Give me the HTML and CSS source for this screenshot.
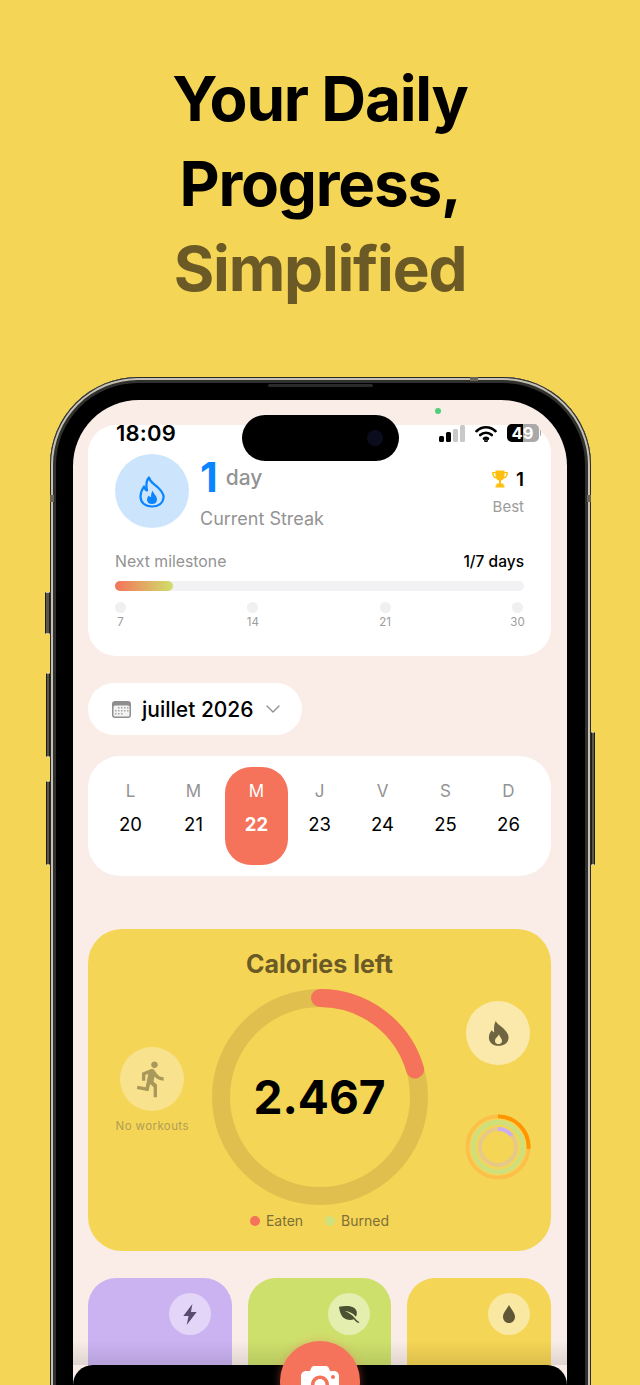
FILE: index.html
```html
<!DOCTYPE html>
<html lang="en">
<head>
    <meta charset="UTF-8">
    <title>Your Daily Progress</title>
    <link rel="stylesheet" href="styles.css">
</head>
<body>
<h1 class="headline">
    <span>Your Daily</span>
    <span>Progress,</span>
    <span class="headline-soft">Simplified</span>
</h1>

<div class="phone">
    <i class="side-btn btn-mute"></i>
    <i class="side-btn btn-up"></i>
    <i class="side-btn btn-down"></i>
    <i class="side-btn btn-power"></i>
    <i class="speaker"></i>
    <i class="band band-left"></i>
    <i class="band band-right"></i>
    <i class="band band-top"></i>

    <div class="screen">
        <i class="mic-dot"></i>
        <div class="island"><i class="island-cam"></i></div>

        <div class="status">
            <span class="status-time">18:09</span>
            <div class="status-icons">
                <svg width="26" height="17" viewBox="0 0 26 17">
                    <rect x="0" y="11" width="5" height="6" rx="1.5" fill="#000"/>
                    <rect x="7" y="7" width="5" height="10" rx="1.5" fill="#000"/>
                    <rect x="14" y="4" width="5" height="13" rx="1.5" fill="#c9c9c9"/>
                    <rect x="21" y="0" width="5" height="17" rx="1.5" fill="#c9c9c9"/>
                </svg>
                <svg width="22" height="17" viewBox="0 0 22 17" fill="none" stroke="#000" stroke-width="2.6" stroke-linecap="round">
                    <path d="M1.5 6.2C6.8 1 15.2 1 20.5 6.2"/>
                    <path d="M5.2 10C8.4 6.9 13.6 6.9 16.8 10"/>
                    <path d="M9 13.6C10.2 12.6 11.8 12.6 13 13.6"/>
                    <circle cx="11" cy="15.4" r="0.6" fill="#000"/>
                </svg>
                <div class="battery">
                    <div class="battery-body"><span class="battery-level"></span><span class="battery-num">49</span></div>
                    <i class="battery-tip"></i>
                </div>
            </div>
        </div>

        <section class="card streak">
            <div class="streak-head">
                <div class="flame-circle">
                    <svg width="26" height="33" viewBox="0 0 26 32">
                        <path d="M10 2C11 7 15 8 19 12C23 16 25 19 24.5 22C24 28 19 31 13 31C6 31 1.5 27 1.5 21C1.5 17 3 14 5 11C5.5 13 6.5 14.5 8 15C7 10 7 5 10 2Z" fill="none" stroke="#0a84ff" stroke-width="2.2" stroke-linejoin="round"/>
                        <path d="M13.5 15C14 18 18 20 18 24C18 27 16 28.5 13 28.5C10 28.5 8 27 8 24C8 22.5 9 21 10 20C10.5 21 11 21.5 12 21.5C12 19 12.5 17 13.5 15Z" fill="#0a84ff"/>
                    </svg>
                </div>
                <div class="streak-text">
                    <div class="streak-count"><b>1</b><span>day</span></div>
                    <div class="streak-label">Current Streak</div>
                </div>
                <div class="streak-best">
                    <div class="best-count">
                        <svg width="16" height="18" viewBox="0 0 16 18">
                            <path d="M3.5 0.5H12.5V2H16C16 6 14.5 8 11.8 8.6C11 9.8 10 10.4 9 10.6V13.5H11.5V15.5H12.5V17.5H3.5V15.5H4.5V13.5H7V10.6C6 10.4 5 9.8 4.2 8.6C1.500 8 0 6 0 2H3.5ZM1.500 3.300C1.700 5.200 2.400 6.400 3.700 7C3.500 6 3.500 4.700 3.500 3.300ZM14.500 3.300H12.500C12.500 4.700 12.500 6 12.300 7C13.600 6.400 14.300 5.200 14.500 3.300Z" fill="#fdbf0f" fill-rule="evenodd"/>
                        </svg>
                        <b>1</b>
                    </div>
                    <div class="best-label">Best</div>
                </div>
            </div>

            <div class="milestone-row">
                <span class="milestone-name">Next milestone</span>
                <span class="milestone-days">1/7 days</span>
            </div>
            <div class="bar"><div class="bar-fill"></div></div>
            <div class="ticks">
                <div class="tick"><i></i><span>7</span></div>
                <div class="tick"><i></i><span>14</span></div>
                <div class="tick"><i></i><span>21</span></div>
                <div class="tick"><i></i><span>30</span></div>
            </div>
        </section>

        <div class="month-pill">
            <svg width="19" height="17" viewBox="0 0 19 17">
                <rect x="0" y="0" width="19" height="17" rx="3" fill="#8e8e8e"/>
                <rect x="1.500" y="4.500" width="16" height="11" rx="1.500" fill="#f2f2f2"/>
                <g fill="#a6a6a6">
                    <rect x="6" y="6" width="1.500" height="1.500"/><rect x="9" y="6" width="1.500" height="1.500"/><rect x="12" y="6" width="1.500" height="1.500"/><rect x="15" y="6" width="1.500" height="1.500"/>
                    <rect x="3" y="9" width="1.500" height="1.500"/><rect x="6" y="9" width="1.500" height="1.500"/><rect x="9" y="9" width="1.500" height="1.500"/><rect x="12" y="9" width="1.500" height="1.500"/><rect x="15" y="9" width="1.500" height="1.500"/>
                    <rect x="3" y="12" width="1.500" height="1.500"/><rect x="6" y="12" width="1.500" height="1.500"/><rect x="9" y="12" width="1.500" height="1.500"/>
                </g>
            </svg>
            <span class="month-name">juillet 2026</span>
            <svg width="14" height="8" viewBox="0 0 14 8" fill="none" stroke="#8e8e8e" stroke-width="1.300" stroke-linecap="round" stroke-linejoin="round"><path d="M1 1L7 7L13 1"/></svg>
        </div>

        <section class="card week">
            <div class="day"><span class="day-letter">L</span><span class="day-num">20</span></div>
            <div class="day"><span class="day-letter">M</span><span class="day-num">21</span></div>
            <div class="day day-active"><span class="day-letter">M</span><span class="day-num">22</span></div>
            <div class="day"><span class="day-letter">J</span><span class="day-num">23</span></div>
            <div class="day"><span class="day-letter">V</span><span class="day-num">24</span></div>
            <div class="day"><span class="day-letter">S</span><span class="day-num">25</span></div>
            <div class="day"><span class="day-letter">D</span><span class="day-num">26</span></div>
        </section>

        <section class="calories">
            <h2 class="cal-title">Calories left</h2>
            <div class="cal-body">
                <div class="cal-side cal-left">
                    <div class="soft-circle">
                        <svg width="40" height="40" viewBox="0 0 24 24"><path d="M13.49 5.480c1.100 0 2-.9 2-2s-.9-2-2-2-2 .9-2 2 .9 2 2 2zm-3.600 13.900l1-4.400 2.100 2v6h2v-7.500l-2.100-2 .6-3c1.300 1.500 3.300 2.500 5.500 2.500v-2c-1.900 0-3.500-1-4.300-2.400l-1-1.600c-.4-.6-1-1-1.700-1-.3 0-.5.1-.8.1l-5.200 2.200v4.700h2v-3.400l1.800-.7-1.600 8.100-4.900-1-.4 2 7 1.400z" fill="#a8985a"/></svg>
                    </div>
                    <span class="no-workouts">No workouts</span>
                </div>
                <svg class="cal-ring" width="216" height="216" viewBox="0 0 216 216" fill="none" stroke-width="18">
                    <circle cx="108" cy="108" r="99" stroke="#e0bf4f"/>
                    <circle cx="108" cy="108" r="99" stroke="#f4735a" stroke-linecap="round" pathLength="100" stroke-dasharray="20.500 100" transform="rotate(-90 108 108)"/>
                </svg>
                <div class="cal-num">2.467</div>
                <div class="cal-side cal-right">
                    <div class="soft-circle soft-light">
                        <svg width="21" height="28" viewBox="0 0 24 30">
                            <path d="M9 1C10 5 14 6 18 10C22 14 23.500 17 23.500 20C23.500 26 18.500 29.500 12 29.500C5.500 29.500 1 25.500 1 20C1 16 3 13.500 4.500 11.500C5 13 6 14 7 14C6.500 9 7 4.500 9 1ZM12.500 16.500C12 19 8 20.500 8 24C8 26.500 10 27.500 12 27.500C14 27.500 16 26.500 16 24C16 21.500 13.500 20 12.500 16.500Z" fill="#6f6542" fill-rule="evenodd"/>
                        </svg>
                    </div>
                    <svg width="66" height="66" viewBox="0 0 68 68" fill="none" stroke-width="4">
                        <circle cx="34" cy="34" r="31.500" stroke="#fbc04a"/>
                        <circle cx="34" cy="34" r="31.500" stroke="#ff9500" pathLength="100" stroke-dasharray="26 100" transform="rotate(-90 34 34)"/>
                        <circle cx="34" cy="34" r="25.500" stroke="#cfdf7c" stroke-width="5"/>
                        <circle cx="34" cy="34" r="18.500" stroke="#e6c88a"/>
                        <circle cx="34" cy="34" r="18.500" stroke="#c9aef2" pathLength="100" stroke-dasharray="14 100" transform="rotate(-90 34 34)"/>
                    </svg>
                </div>
            </div>
            <div class="legend">
                <span class="legend-item"><i class="legend-dot dot-eaten"></i>Eaten</span>
                <span class="legend-item"><i class="legend-dot dot-burned"></i>Burned</span>
            </div>
        </section>

        <div class="macros">
            <div class="macro macro-purple">
                <div class="macro-icon">
                    <svg width="14" height="21" viewBox="0 0 14 22"><path d="M9.500 0L0 12.500H5.500L3.500 22L14 8.500H8Z" fill="#584d70"/></svg>
                </div>
            </div>
            <div class="macro macro-green">
                <div class="macro-icon">
                    <svg width="21" height="17" viewBox="0 0 22 20" preserveAspectRatio="none"><path d="M0 1C9 -1 17 0 18.500 6.500C19 9 18.500 11 17.500 12.500C15 8.500 10.500 6.500 6 6C10 8 14 10.500 16.500 14C17.500 15.500 19.500 17.500 21.500 19L20 20C18 18.500 16.500 17 15.500 15.500C12.500 17 8 16.500 5 14C2 11.500 0.500 6 0 1Z" fill="#4b5233"/></svg>
                </div>
            </div>
            <div class="macro macro-yellow">
                <div class="macro-icon">
                    <svg width="12" height="18" viewBox="0 0 14 20" preserveAspectRatio="none"><path d="M7 0C9 4 14 8.500 14 13C14 17 11 20 7 20C3 20 0 17 0 13C0 8.500 5 4 7 0Z" fill="#5f5636"/></svg>
                </div>
            </div>
        </div>

        <div class="bottom-fade"></div>
        <div class="tabbar"></div>
        <div class="fab">
            <svg width="38" height="32" viewBox="0 0 38 32">
                <path d="M13 0H25C26.500 0 27.500 1 28 2.500L29 5H33C35.800 5 38 7.200 38 10V27C38 29.800 35.800 32 33 32H5C2.200 32 0 29.800 0 27V10C0 7.200 2.200 5 5 5H9L10 2.500C10.500 1 11.500 0 13 0ZM19 9.500C14 9.500 10 13.500 10 18.500C10 23.500 14 27.500 19 27.500C24 27.500 28 23.500 28 18.500C28 13.500 24 9.500 19 9.500ZM19 13C22 13 24.500 15.500 24.500 18.500C24.500 21.500 22 24 19 24C16 24 13.500 21.500 13.500 18.500C13.500 15.500 16 13 19 13ZM32 9C30.900 9 30 9.900 30 11C30 12.100 30.900 13 32 13C33.100 13 34 12.100 34 11C34 9.900 33.100 9 32 9Z" fill="#fff" fill-rule="evenodd"/>
            </svg>
        </div>
    </div>
</div>
</body>
</html>
```

FILE: styles.css
```css
* {
    margin: 0;
    border: 0;
    padding: 0;
    box-sizing: border-box;
}
html, body {
    height: 1385px;
    overflow: hidden;
}
body {
    background-color: #f5d555;
    font-family: "Inter", "Liberation Sans", sans-serif;
    color: #000;
}
i {
    display: block;
}

/* headline */
.headline {
    display: flex;
    flex-direction: column;
    align-items: center;
    padding-top: 56px;
    font-size: 62px;
    font-weight: 700;
    line-height: 85px;
    letter-spacing: -1.200px;
}
.headline-soft {
    color: #6b5a26;
}

/* phone shell */
.phone {
    position: relative;
    width: 541px;
    height: 1046px;
    margin: 66px 0 0 50px;
    padding: 23px 24px 23px 23px;
    background-color: #000;
    border-radius: 88px 88px 0 0;
    box-shadow: inset 0 0 0 1px #2b2a26, inset 0 0 0 3px #c4c0b4, inset 0 0 0 6px #32302c;
}
.side-btn {
    position: absolute;
    background-color: #5a5648;
    border: 1px solid #1f1d18;
    border-top: 1px solid #c8c4b8;
    border-bottom: 1px solid #c8c4b8;
}
.btn-mute {
    left: -5px;
    top: 215px;
    width: 5px;
    height: 42px;
}
.btn-up {
    left: -4px;
    top: 296px;
    width: 4px;
    height: 84px;
}
.btn-down {
    left: -4px;
    top: 404px;
    width: 4px;
    height: 84px;
}
.btn-power {
    right: -4px;
    top: 355px;
    width: 4px;
    height: 133px;
}
.speaker {
    position: absolute;
    left: 218px;
    top: 7px;
    width: 105px;
    height: 3px;
    background-color: #2a2a2a;
    border-radius: 2px;
}
.band {
    position: absolute;
    background-color: #6b655a;
}
.band-left {
    left: 0;
    top: 118px;
    width: 4px;
    height: 7px;
}
.band-right {
    right: 0;
    top: 118px;
    width: 4px;
    height: 7px;
}
.band-top {
    left: 420px;
    top: 0;
    width: 8px;
    height: 4px;
}
.screen {
    position: relative;
    height: 1000px;
    padding: 25px 16px 0 15px;
    background-color: #faede8;
    border-radius: 66px 66px 0 0;
    overflow: hidden;
}

/* status bar */
.mic-dot {
    position: absolute;
    left: 362px;
    top: 8px;
    width: 6px;
    height: 6px;
    border-radius: 50%;
    background-color: #4fcf7a;
}
.island {
    position: absolute;
    left: 169px;
    top: 15px;
    width: 157px;
    height: 46px;
    border-radius: 23px;
    background-color: #000;
}
.island-cam {
    position: absolute;
    right: 16px;
    top: 15px;
    width: 16px;
    height: 16px;
    border-radius: 50%;
    background-color: #0b0d1e;
}
.status {
    position: absolute;
    left: 43px;
    right: 26px;
    top: 22px;
    display: flex;
    justify-content: space-between;
    align-items: center;
    height: 22px;
}
.status-time {
    font-size: 22px;
    font-weight: 600;
    letter-spacing: 0.2px;
}
.status-icons {
    display: flex;
    align-items: center;
    gap: 10px;
}
.battery {
    display: flex;
    align-items: center;
    gap: 1px;
}
.battery-body {
    position: relative;
    width: 32px;
    height: 18px;
    border-radius: 5px;
    background-color: #a9a9a9;
    overflow: hidden;
}
.battery-tip {
    width: 1.5px;
    height: 6px;
    border-radius: 0 2px 2px 0;
    background-color: #a9a9a9;
}
.battery-level {
    position: absolute;
    left: 0;
    top: 0;
    width: 16px;
    height: 18px;
    background-color: #000;
}
.battery-num {
    position: absolute;
    left: 0;
    width: 32px;
    text-align: center;
    color: #fff;
    font-size: 16.500px;
    font-weight: 700;
    line-height: 18px;
}

/* white cards */
.card {
    background-color: #fff;
}
.streak {
    padding: 29px 27px 27px;
    border-radius: 28px;
}
.streak-head {
    display: flex;
    align-items: flex-start;
}
.flame-circle {
    display: flex;
    align-items: center;
    justify-content: center;
    width: 74px;
    height: 74px;
    margin-right: 11px;
    border-radius: 50%;
    background-color: #cce5fd;
}
.streak-text {
    flex-grow: 1;
}
.streak-count {
    display: flex;
    align-items: center;
    gap: 8px;
    height: 46px;
}
.streak-count b {
    color: #0a84ff;
    font-size: 41px;
    font-weight: 700;
}
.streak-count span {
    color: #939393;
    font-size: 21px;
    font-weight: 500;
}
.streak-label {
    margin-top: 7px;
    color: #939393;
    font-size: 18px;
    line-height: 24px;
}
.streak-best {
    display: flex;
    flex-direction: column;
    align-items: flex-end;
}
.best-count {
    display: flex;
    align-items: center;
    gap: 8px;
    height: 50px;
}
.best-count b {
    font-size: 19px;
    font-weight: 600;
}
.best-label {
    margin-top: -7px;
    color: #9c9c9c;
    font-size: 15px;
    line-height: 20px;
}
.milestone-row {
    display: flex;
    justify-content: space-between;
    align-items: center;
    height: 20px;
    margin-top: 20px;
}
.milestone-name {
    color: #939393;
    font-size: 15.800px;
}
.milestone-days {
    font-size: 15.500px;
    font-weight: 500;
}
.bar {
    height: 10px;
    margin-top: 10px;
    border-radius: 5px;
    background-color: #f2f2f5;
}
.bar-fill {
    width: 58px;
    height: 10px;
    border-radius: 5px;
    background: linear-gradient(90deg, #f4735a, #cfe06c);
}
.ticks {
    display: flex;
    justify-content: space-between;
    margin-top: 11px;
    padding-right: 1px;
}
.tick {
    display: flex;
    flex-direction: column;
    align-items: center;
    width: 11px;
}
.tick i {
    width: 11px;
    height: 11px;
    border-radius: 50%;
    background-color: #f0f0f2;
}
.tick span {
    margin-top: 2px;
    color: #9c9c9c;
    font-size: 11.500px;
    line-height: 14px;
    white-space: nowrap;
}

/* month + week */
.month-pill {
    display: flex;
    align-items: center;
    width: 214px;
    height: 52px;
    margin-top: 27px;
    padding-left: 24px;
    border-radius: 26px;
    background-color: #fff;
}
.month-name {
    margin: 0 12px 0 11px;
    font-size: 21px;
    font-weight: 500;
}
.week {
    display: grid;
    grid-template-columns: repeat(7, 1fr);
    margin-top: 21px;
    padding: 11px;
    border-radius: 32px;
}
.day {
    display: flex;
    flex-direction: column;
    align-items: center;
    height: 98px;
    padding-top: 13px;
    border-radius: 26px;
}
.day-letter {
    color: #939393;
    font-size: 17px;
    line-height: 22px;
}
.day-num {
    margin-top: 10px;
    font-size: 18.500px;
    line-height: 24px;
}
.day-active {
    background-color: #f4735a;
}
.day-active .day-letter {
    color: #fff;
}
.day-active .day-num {
    color: #fff;
    font-weight: 700;
}

/* calories */
.calories {
    display: flex;
    flex-direction: column;
    height: 322px;
    margin-top: 53px;
    padding-top: 20px;
    border-radius: 34px;
    background-color: #f5d555;
}
.cal-title {
    color: #6b5a26;
    font-size: 25px;
    font-weight: 700;
    line-height: 30px;
    text-align: center;
}
.cal-body {
    position: relative;
    display: grid;
    grid-template-columns: 1fr 216px 1fr;
    align-items: center;
    margin-top: 10px;
}
.cal-ring {
    grid-column: 2;
    grid-row: 1;
}
.cal-num {
    position: absolute;
    left: 0;
    right: 0;
    text-align: center;
    font-size: 46px;
    font-weight: 700;
    line-height: 216px;
}
.cal-side {
    display: flex;
    flex-direction: column;
    align-items: center;
    padding-bottom: 14px;
}
.cal-left {
    grid-column: 1;
    grid-row: 1;
    padding-left: 5px;
}
.cal-right {
    grid-column: 3;
    grid-row: 1;
    gap: 49px;
    padding-left: 18px;
}
.soft-circle {
    display: flex;
    align-items: center;
    justify-content: center;
    width: 64px;
    height: 64px;
    border-radius: 50%;
    background-color: #f8e28e;
}
.soft-light {
    background-color: #fbe9ab;
}
.no-workouts {
    margin-top: 8px;
    color: #b09e55;
    font-size: 11.500px;
    line-height: 14px;
    letter-spacing: 0.4px;
}
.legend {
    display: flex;
    justify-content: center;
    gap: 22px;
    margin-top: 7px;
}
.legend-item {
    display: flex;
    align-items: center;
    gap: 6px;
    color: #7d6f38;
    font-size: 14px;
    line-height: 18px;
}
.legend-dot {
    width: 10px;
    height: 10px;
    border-radius: 50%;
}
.dot-eaten {
    background-color: #f4735a;
}
.dot-burned {
    background-color: #cfe07c;
}

/* macro cards */
.macros {
    display: grid;
    grid-template-columns: repeat(3, 1fr);
    gap: 16px;
    margin-top: 27px;
}
.macro {
    display: flex;
    justify-content: flex-end;
    height: 120px;
    padding: 15px 21px 0 0;
    border-radius: 28px;
}
.macro-purple {
    background-color: #cbb3f2;
}
.macro-green {
    background-color: #cee06c;
}
.macro-yellow {
    background-color: #f5d555;
}
.macro-icon {
    display: flex;
    align-items: center;
    justify-content: center;
    width: 42px;
    height: 42px;
    border-radius: 50%;
    background-color: rgba(255, 255, 255, 0.45);
}

/* bottom bar */
.bottom-fade {
    position: absolute;
    left: 0;
    right: 0;
    bottom: 35px;
    height: 25px;
    background: linear-gradient(180deg, rgba(0, 0, 0, 0), rgba(0, 0, 0, 0.1));
}
.tabbar {
    position: absolute;
    left: 0;
    right: 0;
    bottom: 0;
    height: 35px;
    border-radius: 20px 20px 0 0;
    background-color: #000;
}
.fab {
    position: absolute;
    left: 207px;
    top: 941px;
    display: flex;
    justify-content: center;
    width: 80px;
    height: 80px;
    padding-top: 25px;
    border-radius: 50%;
    background-color: #f4735a;
    box-shadow: 0 0 8px rgba(244, 115, 90, 0.4);
}
```
